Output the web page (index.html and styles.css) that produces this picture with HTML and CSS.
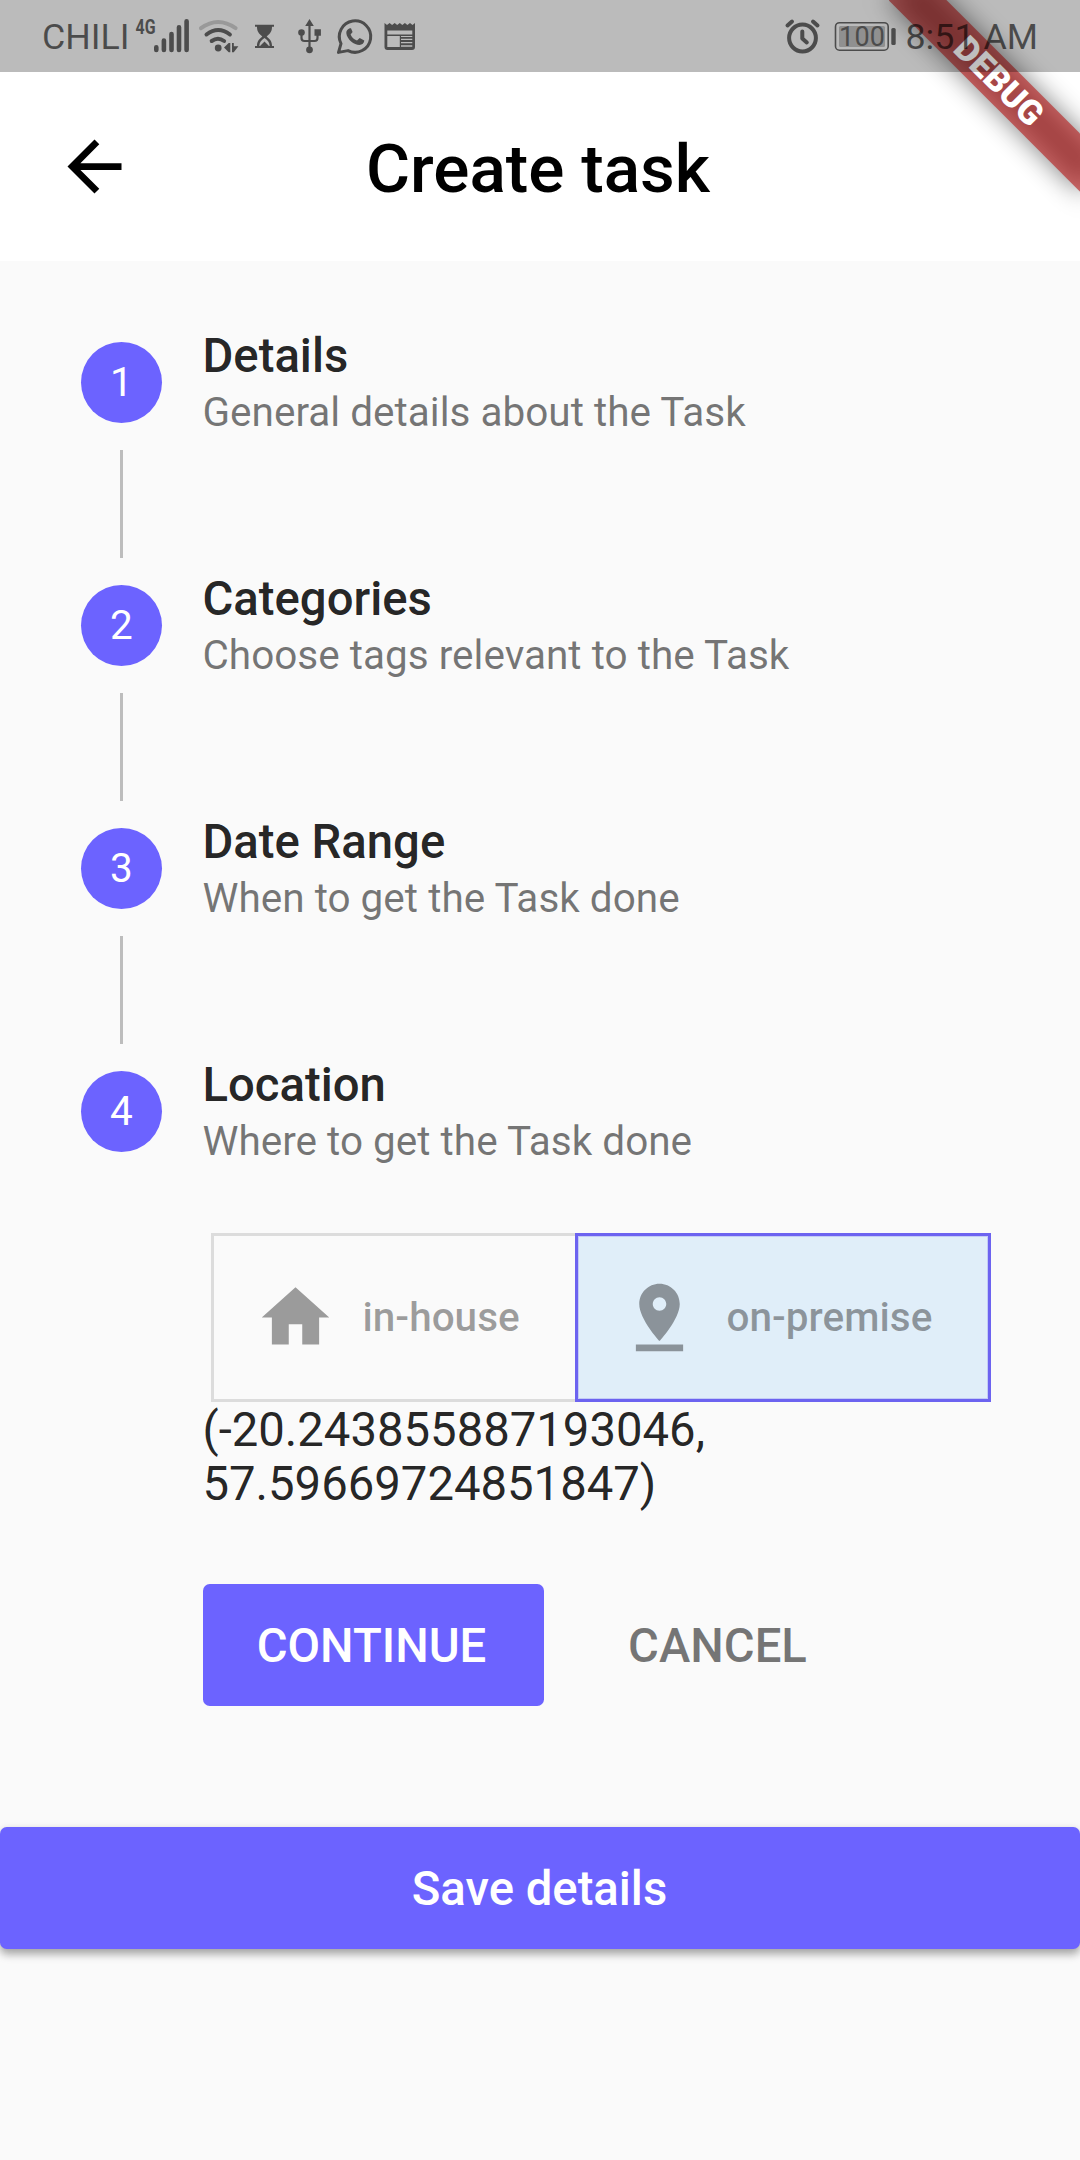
FILE: index.html
```html
<!DOCTYPE html>
<html lang="en">
<head>
<meta charset="utf-8">
<title>Create task</title>
<link rel="stylesheet" href="styles.css">
</head>
<body>
<div class="screen">
  <div class="ribbon-shadow"></div>
  <div class="ribbon">DEBUG</div>

  <div class="status-bar">
    <div class="status-left">
      <span class="carrier">CHILI</span>
      <svg class="status-icon" width="60" height="72" viewBox="134 0 60 72">
        <text class="network" x="135.5" y="34" textLength="20" lengthAdjust="spacingAndGlyphs">4G</text>
        <g class="stroke bars"><path d="M156.3 47.3v2.6M163.9 40.5v9.4M171.5 34v15.9M179 27.3v22.6M186.6 21.3v28.6"/></g>
      </svg>
      <svg class="status-icon" width="54" height="72" viewBox="194 0 54 72">
        <path class="stroke faint" d="M201 28.2q17-12.4 34.6 0"/>
        <path class="stroke" d="M206.5 34.5q11.7-9 23.4 0M211.7 41q6.3-4.4 12.4 0"/>
        <circle cx="218.2" cy="48" r="3.4"/>
        <path d="M230.3 43v9.2h-1.6L224 47.6l4.7-4.6zM232 43h1.8v3.2h4.6l-4.6 6H232z"/>
      </svg>
      <svg class="status-icon" width="38" height="72" viewBox="248 0 38 72">
        <path d="M255 24.8h19v2h-2c0 4.400-1.500 6.500-5.300 9.700 3.800 3.200 5.300 5.300 5.300 9.500h2v2h-19v-2h2c0-4.200 1.500-6.300 5.300-9.500-3.800-3.200-5.300-5.300-5.300-9.700h-2zM264.500 38c-3.400 2.400-5 4.500-5.200 8h.7l4.500-4.500 4.500 4.500h.7c-.2-3.500-1.800-5.600-5.200-8z" fill-rule="evenodd"/>
      </svg>
      <svg class="status-icon" width="44" height="72" viewBox="286 0 44 72">
        <path d="M309.500 19l4.300 7h-8.600zM314.500 29.300h6.400v6.400h-6.400z"/>
        <circle cx="301.500" cy="32.500" r="3.300"/><circle cx="309.500" cy="49.800" r="3.400"/>
        <path class="thin" d="M309.500 25v24M301.500 33v5q0 3 3 3h10q3 0 3-3v-5"/>
      </svg>
      <svg class="status-icon" width="48" height="72" viewBox="330 0 48 72">
        <path class="whats" d="M341 43.600A15.700 15.700 0 1 1 348 50.600L338.500 52.400z"/>
        <path d="M349.800 28.200c-2 .6-3.600 2.500-3.500 4.700.6 6.500 7.900 12 13.200 12 2.600 0 4.600-1.500 4.800-4.300l-4.600-2.500-2.700 2.500c-3-1-5.300-3.300-6.400-6l2-2.500-1.600-3.800z"/>
      </svg>
      <svg class="status-icon" width="42" height="72" viewBox="378 0 42 72">
        <path fill-rule="evenodd" d="M384.500 23l2.500 2 2.600-2 2.500 2 2.600-2 2.500 2 2.600-2 2.500 2 2.600-2 2.500 2 2.600-2 2.500 2 2.500-2v24q0 3-3 3h-24.500q-3 0-3-3zM387.300 30.500v4h25v-4zM387.300 36v11h12.500v-11zM401 36v1h11.300v-1zM401 38.700v1.300h11.300v-1.300zM401 42v1.300h11.300V42zM401 45.300v1.400h11.300v-1.400z"/>
      </svg>
    </div>
    <div class="status-right">
      <svg class="status-icon" width="48" height="72" viewBox="780 0 48 72">
        <circle class="stroke" cx="802.500" cy="38" r="13.400"/>
        <path class="stroke" d="M802.300 31.500v7l4.500 4M787.500 25.500l4.500-4M817.500 25.500l-4.500-4"/>
      </svg>
      <svg class="status-icon" width="76" height="72" viewBox="828 0 76 72">
        <rect class="outline" x="835.500" y="22.700" width="52.700" height="27.500" rx="4"/>
        <rect class="charge" x="839" y="26" width="46" height="21" rx="1.500"/>
        <rect x="891.300" y="28" width="4.400" height="17" rx="1.500"/>
        <text class="percent" x="839" y="46" textLength="46">100</text>
      </svg>
      <span class="clock">8:51 AM</span>
    </div>
  </div>

  <header class="app-bar">
    <svg class="back" viewBox="0 0 24 24"><path d="M20 11H7.830l5.590-5.590L12 4l-8 8 8 8 1.410-1.410L7.830 13H20v-2z"/></svg>
    <h1 class="app-title">Create task</h1>
  </header>

  <main class="stepper">
    <section class="step">
      <div class="rail"><span class="line blank"></span><span class="circle">1</span><span class="line"></span></div>
      <div class="labels"><h2 class="step-title">Details</h2><p class="step-sub">General details about the Task</p></div>
    </section>
    <section class="step">
      <div class="rail"><span class="line"></span><span class="circle">2</span><span class="line"></span></div>
      <div class="labels"><h2 class="step-title">Categories</h2><p class="step-sub">Choose tags relevant to the Task</p></div>
    </section>
    <section class="step">
      <div class="rail"><span class="line"></span><span class="circle">3</span><span class="line"></span></div>
      <div class="labels"><h2 class="step-title">Date Range</h2><p class="step-sub">When to get the Task done</p></div>
    </section>
    <section class="step">
      <div class="rail"><span class="line"></span><span class="circle">4</span><span class="line blank"></span></div>
      <div class="labels"><h2 class="step-title">Location</h2><p class="step-sub">Where to get the Task done</p></div>
    </section>

    <div class="step-content">
      <div class="toggle">
        <div class="option">
          <svg class="option-icon" viewBox="0 0 24 24"><path d="M10 20v-6h4v6h5v-8h3L12 3 2 12h3v8z"/></svg>
          <span class="option-label">in-house</span>
        </div>
        <div class="option selected">
          <svg class="option-icon" viewBox="0 0 24 24"><path d="M18 8c0-3.310-2.690-6-6-6S6 4.690 6 8c0 4.500 6 11 6 11s6-6.500 6-11zm-8 0c0-1.100.9-2 2-2s2 .9 2 2-.89 2-2 2c-1.100 0-2-.9-2-2zM5 20v2h14v-2H5z"/></svg>
          <span class="option-label">on-premise</span>
        </div>
      </div>
      <p class="coords">(-20.243855887193046,<br>57.59669724851847)</p>
      <div class="actions">
        <button class="btn continue">CONTINUE</button>
        <button class="btn cancel">CANCEL</button>
      </div>
    </div>
  </main>

  <button class="btn save">Save details</button>
</div>
</body>
</html>
```
FILE: styles.css
```css
* { box-sizing: border-box; }

body {
  margin: 0;
  font-family: Roboto, sans-serif;
  color: rgba(0, 0, 0, 0.87);
}

h1, h2, p { margin: 0; font-weight: 400; }

.screen {
  position: relative;
  width: 1080px;
  height: 2160px;
  overflow: hidden;
  background: #fafafa;
  display: flex;
  flex-direction: column;
}

/* Debug ribbon across the top right corner */
.ribbon, .ribbon-shadow {
  position: absolute;
  z-index: 1;
  left: 864px;
  top: 60.75px;
  width: 270px;
  height: 40.5px;
  transform: rotate(45deg);
}
.ribbon-shadow { background: rgba(0, 0, 0, 0.5); filter: blur(13px); }
.ribbon {
  background: rgba(183, 28, 28, 0.627);
  color: #fff;
  font-size: 34.4px;
  font-weight: 900;
  line-height: 40.5px;
  text-align: center;
}

/* System status bar */
.status-bar {
  position: relative;
  z-index: 2;
  flex: none;
  height: 72px;
  padding: 0 42px 0 41px;
  display: flex;
  justify-content: space-between;
  background: rgba(0, 0, 0, 0.25);
  color: rgba(0, 0, 0, 0.6);
  font-size: 35.8px;
  line-height: 75px;
  white-space: nowrap;
}
.status-left, .status-right { display: flex; }
.carrier { width: 93px; padding-left: 1px; }
.clock { width: 134px; text-align: right; }
.status-icon { display: block; flex: none; fill: #4c4c4c; }
.stroke { fill: none; stroke: #4c4c4c; stroke-width: 4; stroke-linecap: round; stroke-linejoin: round; }
.bars { stroke-width: 4.6; }
.faint { stroke: #999; }
.thin { fill: none; stroke: #4c4c4c; stroke-width: 2.2; }
.whats { fill: none; stroke: #4c4c4c; stroke-width: 3; stroke-linejoin: round; }
.outline { fill: none; stroke: #4c4c4c; stroke-width: 1.6; }
.charge { fill: #909090; }
.network { font-size: 21px; font-weight: 700; }
.percent { font-size: 27px; }

/* App bar */
.app-bar {
  flex: none;
  height: 189px;
  padding: 0 56px 0 54px;
  display: grid;
  grid-template-columns: 81px 1fr 81px;
  align-items: center;
  background: #fff;
  color: #000;
}
.back { width: 81px; height: 81px; }
.app-title {
  font-size: 67.5px;
  font-weight: 500;
  line-height: 80px;
  text-align: center;
  padding-top: 4px;
  padding-right: 2px;
}

/* Steps */
.stepper { padding: 0 81px; }
.step { height: 243px; display: flex; gap: 40.5px; }
.rail {
  width: 81px;
  display: flex;
  flex-direction: column;
  align-items: center;
  justify-content: space-between;
}
.line { width: 3px; height: 54px; background: #bdbdbd; }
.line.blank { background: none; }
.circle {
  width: 81px;
  height: 81px;
  border-radius: 50%;
  background: #6c63ff;
  color: #fff;
  font-size: 40.5px;
  line-height: 81px;
  text-align: center;
}
.labels { padding-top: 68px; white-space: nowrap; }
.step-title { font-size: 47.25px; font-weight: 500; line-height: 55px; }
.step-sub { margin-top: 4px; font-size: 40.5px; line-height: 48px; color: rgba(0, 0, 0, 0.54); }

/* Location step body */
.step-content { padding-left: 121.5px; }
.toggle {
  width: 780px;
  height: 169px;
  margin-left: 8.5px;
  display: grid;
  grid-template-columns: 364px 416px;
}
.option {
  display: flex;
  align-items: center;
  gap: 27px;
  padding-left: 40.5px;
  border: 3px solid #dcdcdc;
  border-right: 0;
  color: rgba(0, 0, 0, 0.38);
  font-size: 40.5px;
  font-weight: 500;
}
.option.selected {
  border: 3px solid #6c63f0;
  background: #e0eef9;
  box-shadow: inset 0 0 0 1px rgba(108, 99, 240, 0.25);
}
.option-icon { width: 81px; height: 81px; fill: currentColor; flex: none; }
.option-label { padding-bottom: 2px; }
.coords { padding-top: 1px; font-size: 47.25px; line-height: 54px; }
.actions { display: flex; gap: 27px; padding-top: 73px; }

.btn {
  height: 121.5px;
  border: 0;
  padding: 3px 0 0;
  border-radius: 6.75px;
  background: #6c63ff;
  color: #fff;
  font-family: inherit;
  font-size: 47.25px;
  font-weight: 500;
  line-height: 118px;
}
.continue { width: 341px; padding-right: 3px; }
.cancel { width: 294px; background: none; color: rgba(0, 0, 0, 0.54); }
.save {
  flex: none;
  width: 100%;
  margin-top: 121.5px;
  padding-right: 1px;
  box-shadow: 0 6px 8px rgba(0, 0, 0, 0.22), 0 3px 8px rgba(0, 0, 0, 0.18);
}
```
